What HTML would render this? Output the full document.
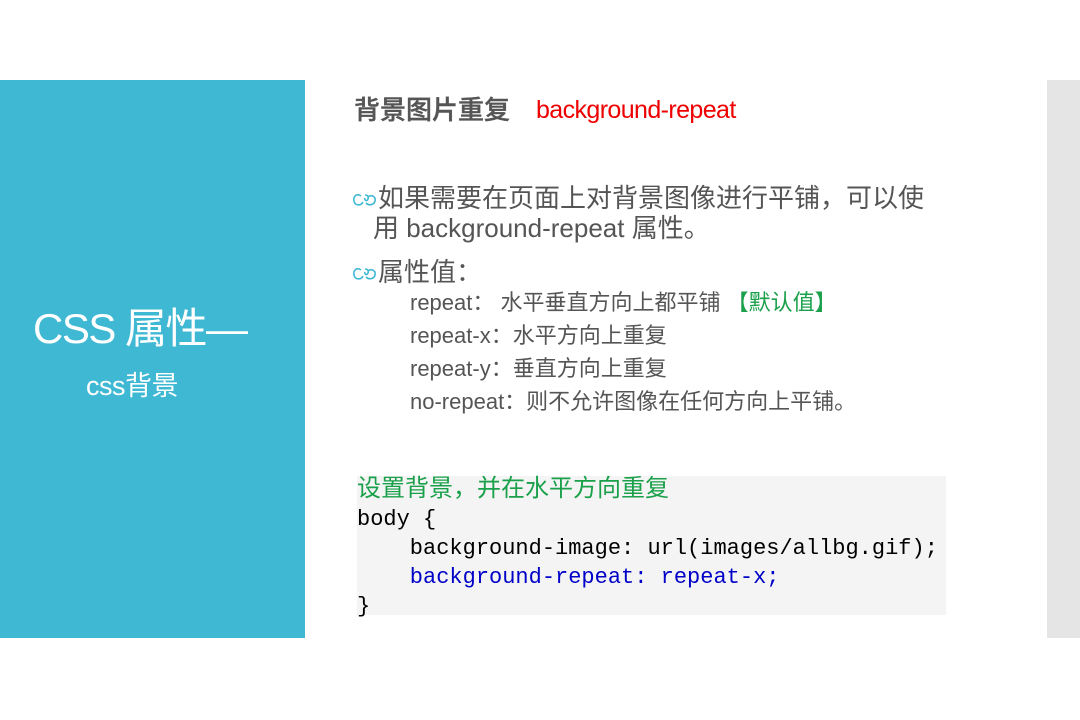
<!DOCTYPE html>
<html><head><meta charset="utf-8"><style>
body{margin:0;width:1080px;height:720px;background:#fff;position:relative;overflow:hidden;font-family:"Liberation Sans","Noto Sans CJK SC",sans-serif;color:#555}
.l{position:absolute;left:0;top:80px;width:305px;height:558px;background:#3fb8d4;color:#fff}
.r{position:absolute;left:1047px;top:80px;width:33px;height:558px;background:#e5e5e5}
.a{position:absolute;white-space:nowrap}
.code{position:absolute;left:357px;top:476px;width:589px;height:139px;background:#f4f4f4;font-family:"Liberation Mono","Noto Sans CJK SC",monospace;font-size:22px;line-height:29px;color:#000;white-space:pre}
svg.b{display:inline-block;width:26px;height:16px;vertical-align:-1px}
</style></head><body>
<div class="l">
<div class="a" style="left:33px;top:222px;font-size:42px;line-height:54px;letter-spacing:-1.5px">CSS 属性—</div>
<div class="a" style="left:86px;top:290px;font-size:27px;line-height:32px;letter-spacing:-0.5px">css背景</div>
</div>
<div class="r"></div>
<div class="a" style="left:354px;top:94px;font-size:26px;line-height:32px;color:#555;font-weight:500;-webkit-text-stroke:0.4px #555">背景图片重复</div>
<div class="a" style="left:536px;top:94px;font-size:25px;line-height:32px;color:#e00;letter-spacing:-0.6px">background-repeat</div>
<div class="a" style="left:352px;top:183px;font-size:26px;line-height:30px"><svg class="b" viewBox="0 0 26 16"><path d="M9 4C5 1 1 4 2 9c1 5 7 5 9 1M13 3c2 0 4 1 3 4c-1 3-4 1-3-1M16 5c4-3 8 0 7 4c-1 4-6 5-9 2" fill="none" stroke="#3fb8d4" stroke-width="1.6"/></svg>如果需要在页面上对背景图像进行平铺，可以使<br><span style="padding-left:21px"></span>用 background-repeat 属性。</div>
<div class="a" style="left:352px;top:257px;font-size:26px;line-height:30px"><svg class="b" viewBox="0 0 26 16"><path d="M9 4C5 1 1 4 2 9c1 5 7 5 9 1M13 3c2 0 4 1 3 4c-1 3-4 1-3-1M16 5c4-3 8 0 7 4c-1 4-6 5-9 2" fill="none" stroke="#3fb8d4" stroke-width="1.6"/></svg>属性值：</div>
<div class="a" style="left:410px;top:286px;font-size:22px;line-height:33px">repeat： 水平垂直方向上都平铺 <span style="color:#1aa04a">【默认值】</span><br>repeat-x：水平方向上重复<br>repeat-y：垂直方向上重复<br>no-repeat：则不允许图像在任何方向上平铺。</div>
<div class="code"><span style="color:#1aa04a;font-size:24px">设置背景，并在水平方向重复</span>
body {
    background-image: url(images/allbg.gif);
<span style="color:#0000c8">    background-repeat: repeat-x;</span>
}</div>
</body></html>
